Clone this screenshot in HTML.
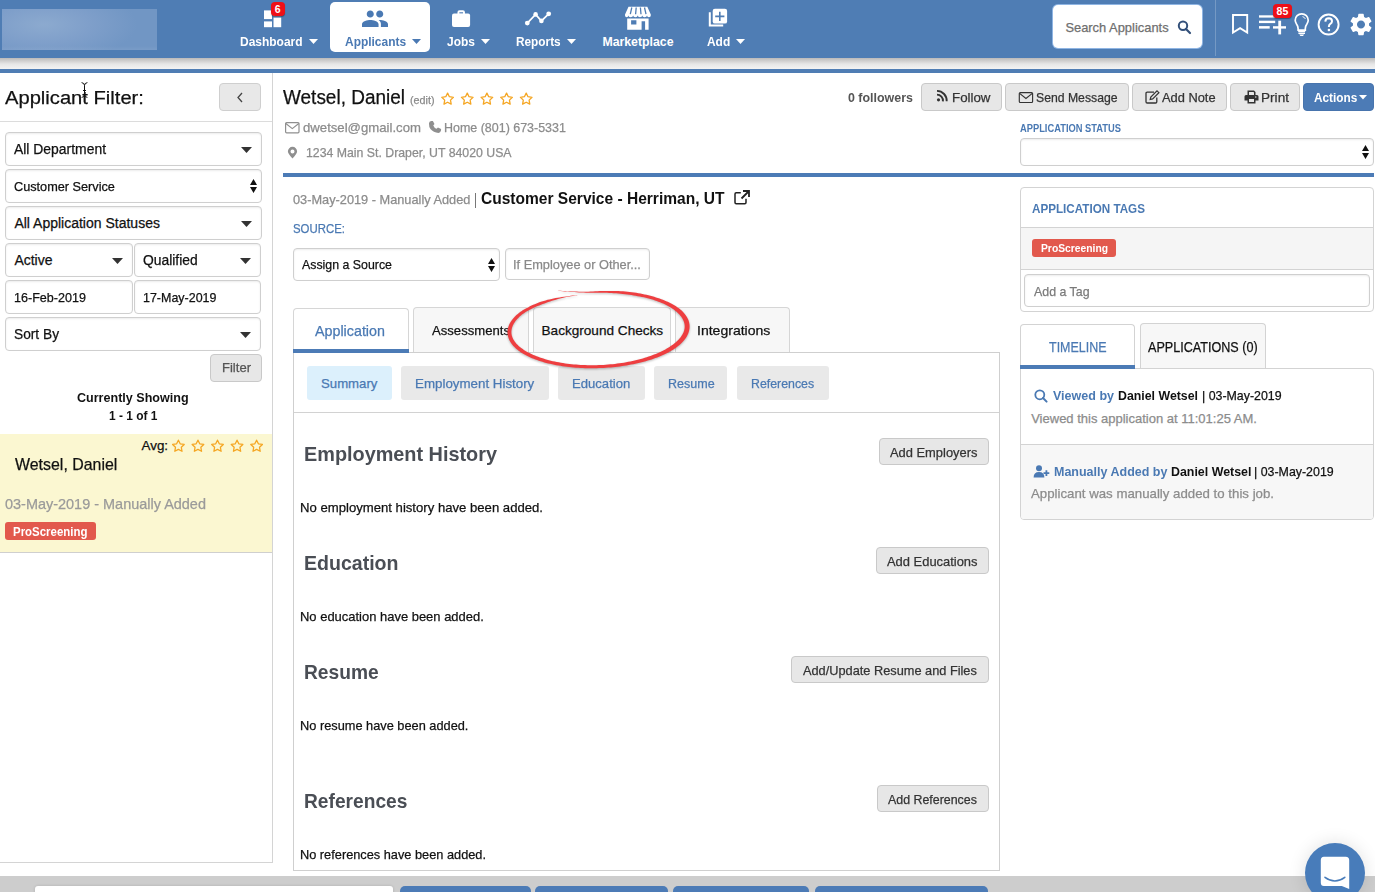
<!DOCTYPE html><html><head><meta charset="utf-8"><style>
html,body{margin:0;padding:0;width:1375px;height:892px;overflow:hidden;background:#fff;position:relative;font-family:"Liberation Sans",sans-serif;}
.t{position:absolute;white-space:nowrap;line-height:1;-webkit-text-stroke:0.25px currentColor;}
.b{position:absolute;}
.s{position:absolute;overflow:visible;}
</style></head><body>
<div class="b" style="left:0px;top:0px;width:1375px;height:58px;background:#4f7db4;"></div>
<div class="b" style="left:2px;top:9px;width:155px;height:41px;background:radial-gradient(ellipse 60% 90% at 27% 38%,#8caacf 0%,#7f9fca 50%,#7196c4 100%);"></div>
<div class="b" style="left:2px;top:46px;width:155px;height:4px;background:linear-gradient(rgba(255,255,255,0),rgba(255,255,255,.06));"></div>
<div class="b" style="left:0px;top:58px;width:1375px;height:11px;background:linear-gradient(#bbbaba,#e6e6e6 55%,#f3f3f3);"></div>
<div class="b" style="left:0px;top:69px;width:1375px;height:4px;background:#4f7db4;"></div>
<div class="b" style="left:330px;top:2px;width:100px;height:50px;background:#fff;border-radius:5px;"></div>
<div class="t" style="left:240.40px;top:36px;font-size:12.3px;color:#fff;font-weight:bold;-webkit-text-stroke:0;transform:scaleX(0.9744);transform-origin:0 0;">Dashboard</div>
<svg class="s" style="left:309px;top:39px;width:9px;height:5px;" viewBox="0 0 9 5"><path d="M0 0H9L4.5 5Z" fill="#fff"/></svg>
<div class="t" style="left:344.50px;top:36px;font-size:12.3px;color:#4a79b3;font-weight:bold;-webkit-text-stroke:0;transform:scaleX(0.9717);transform-origin:0 0;">Applicants</div>
<svg class="s" style="left:411.5px;top:39px;width:9px;height:5px;" viewBox="0 0 9 5"><path d="M0 0H9L4.5 5Z" fill="#4a79b3"/></svg>
<div class="t" style="left:447.00px;top:36px;font-size:12.3px;color:#fff;font-weight:bold;-webkit-text-stroke:0;transform:scaleX(0.9718);transform-origin:0 0;">Jobs</div>
<svg class="s" style="left:480.5px;top:39px;width:9px;height:5px;" viewBox="0 0 9 5"><path d="M0 0H9L4.5 5Z" fill="#fff"/></svg>
<div class="t" style="left:516.30px;top:36px;font-size:12.3px;color:#fff;font-weight:bold;-webkit-text-stroke:0;transform:scaleX(0.9618);transform-origin:0 0;">Reports</div>
<svg class="s" style="left:567px;top:39px;width:9px;height:5px;" viewBox="0 0 9 5"><path d="M0 0H9L4.5 5Z" fill="#fff"/></svg>
<div class="t" style="left:602.40px;top:36px;font-size:12.3px;color:#fff;font-weight:bold;-webkit-text-stroke:0;">Marketplace</div>
<div class="t" style="left:706.50px;top:36px;font-size:12.3px;color:#fff;font-weight:bold;-webkit-text-stroke:0;transform:scaleX(0.9703);transform-origin:0 0;">Add</div>
<svg class="s" style="left:735.5px;top:39px;width:9px;height:5px;" viewBox="0 0 9 5"><path d="M0 0H9L4.5 5Z" fill="#fff"/></svg>
<svg class="s" style="left:263px;top:8px;width:24px;height:22px;" viewBox="263 8 24 22"><g fill="#fff">
<rect x="264" y="10.4" width="8" height="8.7"/><rect x="264" y="21.4" width="8" height="5.8"/>
<rect x="273.5" y="17.6" width="7.7" height="9.6"/><rect x="273.5" y="10.4" width="7.7" height="5.8"/></g></svg>
<div class="b" style="left:270.5px;top:2px;width:14.5px;height:14px;background:#ee0f17;border-radius:4px;box-shadow:0 1px 1px rgba(0,0,0,.35);"></div>
<div class="t" style="left:270.50px;top:4px;font-size:10.5px;color:#fff;font-weight:bold;-webkit-text-stroke:0;width:14.5px;text-align:center;">6</div>
<svg class="s" style="left:362px;top:9.5px;width:26px;height:17.5px;preserveAspectRatio:none;" viewBox="1 5 22 14"><path fill="#4a79b3" d="M16 11c1.66 0 2.99-1.34 2.99-3S17.66 5 16 5c-1.66 0-3 1.34-3 3s1.34 3 3 3zm-8 0c1.66 0 2.99-1.34 2.99-3S9.66 5 8 5C6.34 5 5 6.34 5 8s1.34 3 3 3zm0 2c-2.330 0-7 1.17-7 3.5V19h14v-2.5c0-2.33-4.67-3.5-7-3.5zm8 0c-.29 0-.62.02-.97.05 1.16.84 1.97 1.97 1.97 3.45V19h6v-2.5c0-2.33-4.67-3.5-7-3.5z"/></svg>
<svg class="s" style="left:450px;top:8px;width:24px;height:22px;" viewBox="450 8 24 22"><rect x="452" y="13.5" width="18.1" height="13.4" rx="2" fill="#fff"/>
<rect x="458.4" y="11.2" width="5.6" height="3.6" rx="1" fill="none" stroke="#fff" stroke-width="1.9"/></svg>
<svg class="s" style="left:522px;top:10px;width:30px;height:17px;" viewBox="522 10 30 17"><polyline points="527.3,23.1 535.6,14.4 541.4,20.9 548.7,13.8" fill="none" stroke="#fff" stroke-width="1.7"/>
<g fill="#fff"><circle cx="527.3" cy="23.1" r="2.4"/><circle cx="535.6" cy="14.4" r="2.3"/><circle cx="541.4" cy="20.9" r="2.3"/><circle cx="548.7" cy="13.8" r="2.4"/></g></svg>
<svg class="s" style="left:624px;top:6px;width:28px;height:25px;" viewBox="624 6 28 25"><path fill="#fff" d="M628.5 6.8H647.3L650.8 14.5V15.5Q650.8 17.2 648.9 17.2Q647.1 17.2 647 15.6Q646.9 17.2 644.6 17.2Q642.4 17.2 642.3 15.6Q642.1 17.2 640 17.2Q637.9 17.2 637.7 15.6Q637.5 17.2 635.4 17.2Q633.3 17.2 633.1 15.6Q633 17.2 630.7 17.2Q628.4 17.2 628.3 15.6Q628.1 17.2 626.8 17.2Q625 17.2 625 15.5V14.5Z"/>
<path d="M631.8 7.5L630.3 14.2M636.2 7.5L635.6 14.2M640.4 7.5L641 14.2M644.5 7.5L646 14.2" stroke="#4f7db4" stroke-width="1.3"/>
<path fill="#fff" fill-rule="evenodd" d="M627.2 18.6H648.6V29.7H645.1V21.3H641.6V29.7H627.2ZM631.1 20.2V24.4H636.4V20.2Z"/></svg>
<svg class="s" style="left:707px;top:7px;width:22px;height:22px;" viewBox="707 7 22 22"><path d="M709.8 12.2V25.6H723.2" fill="none" stroke="#fff" stroke-width="2"/>
<rect x="712.7" y="8.7" width="14.4" height="14.9" rx="2.2" fill="#fff"/>
<path d="M719.8 11.8V21M715.2 16.4H724.4" stroke="#4f7db4" stroke-width="1.6"/></svg>
<div class="b" style="left:1052.7px;top:5.3px;width:149px;height:42.7px;background:#fff;border-radius:5px;box-shadow:0 0 0 1px #8fb5e3;"></div>
<div class="t" style="left:1065.40px;top:22px;font-size:12.9px;color:#6f6f6f;">Search Applicants</div>
<svg class="s" style="left:1177px;top:20px;width:16px;height:15px;" viewBox="1177 20 16 15"><circle cx="1183" cy="25.8" r="4.2" fill="none" stroke="#33507a" stroke-width="2"/>
<path d="M1186 29L1190 33" stroke="#33507a" stroke-width="2.2" stroke-linecap="round"/></svg>
<div class="b" style="left:1215px;top:0px;width:1px;height:56px;background:rgba(255,255,255,.22);"></div>
<svg class="s" style="left:1230px;top:12px;width:21px;height:24px;" viewBox="1230 12 21 24"><path d="M1233 15H1247.2V32.6L1240.1 28.2L1233 32.6Z" fill="none" stroke="#fff" stroke-width="1.9"/></svg>
<svg class="s" style="left:1257px;top:13px;width:32px;height:23px;" viewBox="1257 13 32 23"><g fill="#fff"><rect x="1259" y="15.3" width="16.2" height="2.3"/><rect x="1259" y="20.7" width="16.2" height="2.4"/><rect x="1259" y="26.1" width="10.7" height="2.5"/>
<rect x="1273" y="26.2" width="13" height="2.4"/><rect x="1278.3" y="20.7" width="2.8" height="13.7"/></g></svg>
<div class="b" style="left:1273px;top:4.1px;width:18.8px;height:13.9px;background:#ee0f17;border-radius:4px;box-shadow:0 1px 1px rgba(0,0,0,.35);"></div>
<div class="t" style="left:1273.00px;top:6px;font-size:10.5px;color:#fff;font-weight:bold;-webkit-text-stroke:0;width:18.8px;text-align:center;">85</div>
<svg class="s" style="left:1292px;top:13px;width:19px;height:24px;" viewBox="1292 13 19 24"><path d="M1298.1 30.2V28.5Q1298 26 1296.5 24Q1295.2 22 1295.2 20.3A6.5 6.5 0 0 1 1308.2 20.3Q1308.2 22 1306.9 24Q1305.4 26 1305.3 28.5V30.2Z" fill="none" stroke="#fff" stroke-width="1.7"/>
<path d="M1298.2 31.3H1305.2M1298.4 33.2H1305" stroke="#fff" stroke-width="1.4"/><path d="M1299.3 34.6H1304.1L1303 36H1300.4Z" fill="#fff"/>
<path d="M1302.5 16.6Q1304.6 17.1 1305.4 19" fill="none" stroke="#fff" stroke-width="0.9"/></svg>
<svg class="s" style="left:1316px;top:12px;width:25px;height:25px;" viewBox="1316 12 25 25"><circle cx="1328.6" cy="24.55" r="10" fill="none" stroke="#fff" stroke-width="1.9"/>
<path d="M1325.3 21.6Q1325.5 18.3 1328.8 18.3Q1332 18.4 1332 21.2Q1332 22.8 1330.3 23.8Q1328.9 24.6 1328.9 26.4V27" fill="none" stroke="#fff" stroke-width="2"/>
<circle cx="1328.9" cy="30" r="1.3" fill="#fff"/></svg>
<svg class="s" style="left:1349px;top:12px;width:24px;height:25px;transform:scale(1.12);" viewBox="0 0 24 24"><path fill="#fff" d="M19.14 12.94c.04-.3.06-.61.06-.94 0-.32-.02-.64-.07-.94l2.03-1.58c.18-.14.23-.41.12-.61l-1.92-3.32c-.12-.22-.37-.29-.59-.22l-2.39.96c-.5-.38-1.03-.7-1.62-.94l-.36-2.54c-.04-.24-.24-.41-.48-.41h-3.84c-.24 0-.43.17-.47.41l-.36 2.54c-.59.24-1.13.57-1.62.94l-2.39-.96c-.22-.08-.47 0-.59.22L2.74 8.87c-.12.21-.08.47.12.61l2.03 1.58c-.05.3-.09.63-.09.94s.02.64.07.94l-2.03 1.58c-.18.14-.23.41-.12.61l1.92 3.32c.12.22.37.29.59.22l2.39-.96c.5.38 1.03.7 1.62.94l.36 2.54c.05.24.24.41.48.41h3.84c.24 0 .44-.17.47-.41l.36-2.54c.59-.24 1.13-.56 1.62-.94l2.39.96c.22.08.47 0 .59-.22l1.92-3.32c.12-.22.07-.47-.12-.61l-2.01-1.58zM12 15.6c-1.98 0-3.6-1.62-3.6-3.6s1.62-3.6 3.6-3.6 3.6 1.62 3.6 3.6-1.62 3.6-3.6 3.6z"/></svg>
<div class="b" style="left:272px;top:73px;width:1px;height:790px;background:#d4d4d4;"></div>
<div class="b" style="left:0px;top:862px;width:272px;height:1px;background:#d4d4d4;"></div>
<div class="t" style="left:5.00px;top:88px;font-size:19.2px;color:#111;transform:scaleX(1.0505);transform-origin:0 0;">Applicant Filter:</div>
<svg class="s" style="left:80px;top:81px;width:10px;height:18px;" viewBox="80 81 10 18"><path d="M81.6 82.6Q84.5 83 84.5 85.5V95Q84.5 97 81.6 97.4M87.4 82.6Q84.5 83 84.5 85.5M87.4 97.4Q84.5 97 84.5 95M83 90.5H86" fill="none" stroke="#111" stroke-width="1"/></svg>
<div class="b" style="left:219px;top:83px;width:42px;height:28px;background:#e7e7e7;border:1px solid #c9c9c9;border-radius:4px;box-sizing:border-box;background:#e8e8e8;border-color:#cfcfcf;"></div>
<svg class="s" style="left:236px;top:92px;width:8px;height:11px;" viewBox="0 0 8 11"><path d="M6 1L2 5.5L6 10" fill="none" stroke="#444" stroke-width="1.3"/></svg>
<div class="b" style="left:0px;top:121px;width:272px;height:1px;background:#dcdcdc;"></div>
<div class="b" style="left:5px;top:132px;width:257px;height:34px;background:#fff;border:1px solid #cfcfcf;border-radius:4px;box-sizing:border-box;box-shadow:inset 0 1px 2px rgba(0,0,0,.08);"></div>
<div class="t" style="left:14.40px;top:142px;font-size:14px;color:#111;transform:scaleX(0.9936);transform-origin:0 0;">All Department</div>
<svg class="s" style="left:241px;top:146.5px;width:11px;height:6px;" viewBox="0 0 11 6"><path d="M0 0H11L5.5 6Z" fill="#333"/></svg>
<div class="b" style="left:5px;top:169px;width:257px;height:34px;background:#fff;border:1px solid #cfcfcf;border-radius:4px;box-sizing:border-box;box-shadow:inset 0 1px 2px rgba(0,0,0,.08);"></div>
<div class="t" style="left:14.40px;top:181px;font-size:12.9px;color:#111;transform:scaleX(0.9852);transform-origin:0 0;">Customer Service</div>
<svg class="s" style="left:250px;top:179px;width:7px;height:14px;" viewBox="0 0 7 14"><path d="M0 6H7L3.5 0Z M0 8H7L3.5 14Z" fill="#111"/></svg>
<div class="b" style="left:5px;top:206px;width:257px;height:34px;background:#fff;border:1px solid #cfcfcf;border-radius:4px;box-sizing:border-box;box-shadow:inset 0 1px 2px rgba(0,0,0,.08);"></div>
<div class="t" style="left:14.40px;top:216px;font-size:14px;color:#111;">All Application Statuses</div>
<svg class="s" style="left:241px;top:220.5px;width:11px;height:6px;" viewBox="0 0 11 6"><path d="M0 0H11L5.5 6Z" fill="#333"/></svg>
<div class="b" style="left:5px;top:243px;width:127.5px;height:34px;background:#fff;border:1px solid #cfcfcf;border-radius:4px;box-sizing:border-box;box-shadow:inset 0 1px 2px rgba(0,0,0,.08);"></div>
<div class="t" style="left:14.40px;top:253px;font-size:14px;color:#111;">Active</div>
<svg class="s" style="left:111.5px;top:257.5px;width:11px;height:6px;" viewBox="0 0 11 6"><path d="M0 0H11L5.5 6Z" fill="#333"/></svg>
<div class="b" style="left:133.5px;top:243px;width:127.5px;height:34px;background:#fff;border:1px solid #cfcfcf;border-radius:4px;box-sizing:border-box;box-shadow:inset 0 1px 2px rgba(0,0,0,.08);"></div>
<div class="t" style="left:142.90px;top:253px;font-size:14px;color:#111;transform:scaleX(0.9899);transform-origin:0 0;">Qualified</div>
<svg class="s" style="left:240.0px;top:257.5px;width:11px;height:6px;" viewBox="0 0 11 6"><path d="M0 0H11L5.5 6Z" fill="#333"/></svg>
<div class="b" style="left:5px;top:280px;width:127.5px;height:34px;background:#fff;border:1px solid #cfcfcf;border-radius:4px;box-sizing:border-box;box-shadow:inset 0 1px 2px rgba(0,0,0,.08);"></div>
<div class="t" style="left:14.20px;top:292px;font-size:12.9px;color:#111;transform:scaleX(0.9747);transform-origin:0 0;">16-Feb-2019</div>
<div class="b" style="left:133.5px;top:280px;width:127.5px;height:34px;background:#fff;border:1px solid #cfcfcf;border-radius:4px;box-sizing:border-box;box-shadow:inset 0 1px 2px rgba(0,0,0,.08);"></div>
<div class="t" style="left:142.80px;top:292px;font-size:12.9px;color:#111;transform:scaleX(0.9670);transform-origin:0 0;">17-May-2019</div>
<div class="b" style="left:5px;top:317px;width:256px;height:34px;background:#fff;border:1px solid #cfcfcf;border-radius:4px;box-sizing:border-box;box-shadow:inset 0 1px 2px rgba(0,0,0,.08);"></div>
<div class="t" style="left:14.40px;top:327px;font-size:14px;color:#111;transform:scaleX(0.9803);transform-origin:0 0;">Sort By</div>
<svg class="s" style="left:240px;top:331.5px;width:11px;height:6px;" viewBox="0 0 11 6"><path d="M0 0H11L5.5 6Z" fill="#333"/></svg>
<div class="b" style="left:210px;top:354px;width:51.5px;height:27.5px;background:#e7e7e7;border:1px solid #c9c9c9;border-radius:4px;box-sizing:border-box;"></div>
<div class="t" style="left:221.50px;top:362px;font-size:12.9px;color:#555;transform:scaleX(1.0116);transform-origin:0 0;">Filter</div>
<div class="t" style="left:77.20px;top:391px;font-size:13px;color:#111;font-weight:bold;-webkit-text-stroke:0;transform:scaleX(0.9657);transform-origin:0 0;">Currently Showing</div>
<div class="t" style="left:108.80px;top:409px;font-size:13px;color:#111;font-weight:bold;-webkit-text-stroke:0;transform:scaleX(0.9178);transform-origin:0 0;">1 - 1 of 1</div>
<div class="b" style="left:0px;top:434px;width:272px;height:119px;background:#fbf7d1;border-bottom:1px solid #cfcfcf;box-sizing:border-box;"></div>
<div class="t" style="left:141.50px;top:439px;font-size:13.4px;color:#111;">Avg:</div>
<svg class="s" style="left:165px;top:436px;width:105px;height:20px;" viewBox="165 436 105 20"><polygon points="178.40,440.20 180.19,443.83 184.20,444.41 181.30,447.24 181.99,451.24 178.40,449.35 174.81,451.24 175.50,447.24 172.60,444.41 176.61,443.83" fill="none" stroke="#f5a623" stroke-width="1.3" stroke-linejoin="round"/><polygon points="197.95,440.20 199.74,443.83 203.75,444.41 200.85,447.24 201.54,451.24 197.95,449.35 194.36,451.24 195.05,447.24 192.15,444.41 196.16,443.83" fill="none" stroke="#f5a623" stroke-width="1.3" stroke-linejoin="round"/><polygon points="217.50,440.20 219.29,443.83 223.30,444.41 220.40,447.24 221.09,451.24 217.50,449.35 213.91,451.24 214.60,447.24 211.70,444.41 215.71,443.83" fill="none" stroke="#f5a623" stroke-width="1.3" stroke-linejoin="round"/><polygon points="237.05,440.20 238.84,443.83 242.85,444.41 239.95,447.24 240.64,451.24 237.05,449.35 233.46,451.24 234.15,447.24 231.25,444.41 235.26,443.83" fill="none" stroke="#f5a623" stroke-width="1.3" stroke-linejoin="round"/><polygon points="256.60,440.20 258.39,443.83 262.40,444.41 259.50,447.24 260.19,451.24 256.60,449.35 253.01,451.24 253.70,447.24 250.80,444.41 254.81,443.83" fill="none" stroke="#f5a623" stroke-width="1.3" stroke-linejoin="round"/></svg>
<div class="t" style="left:15.30px;top:456px;font-size:17px;color:#111;transform:scaleX(0.9370);transform-origin:0 0;">Wetsel, Daniel</div>
<div class="t" style="left:5.00px;top:497px;font-size:14.8px;color:#9a9a9a;transform:scaleX(0.9772);transform-origin:0 0;">03-May-2019 - Manually Added</div>
<div class="b" style="left:5px;top:522px;width:91px;height:18px;background:#e2594d;border-radius:3px;"></div>
<div class="t" style="left:13.20px;top:526px;font-size:12px;color:#fff;font-weight:bold;-webkit-text-stroke:0;transform:scaleX(0.9535);transform-origin:0 0;">ProScreening</div>
<div class="t" style="left:283.00px;top:88px;font-size:19.6px;color:#111;transform:scaleX(0.9682);transform-origin:0 0;">Wetsel, Daniel</div>
<div class="t" style="left:410.40px;top:95px;font-size:11px;color:#8a8a8a;transform:scaleX(0.9775);transform-origin:0 0;">(edit)</div>
<svg class="s" style="left:436px;top:86px;width:100px;height:20px;" viewBox="436 86 100 20"><polygon points="447.60,93.10 449.39,96.73 453.40,97.31 450.50,100.14 451.19,104.14 447.60,102.25 444.01,104.14 444.70,100.14 441.80,97.31 445.81,96.73" fill="none" stroke="#f5a623" stroke-width="1.3" stroke-linejoin="round"/><polygon points="467.25,93.10 469.04,96.73 473.05,97.31 470.15,100.14 470.84,104.14 467.25,102.25 463.66,104.14 464.35,100.14 461.45,97.31 465.46,96.73" fill="none" stroke="#f5a623" stroke-width="1.3" stroke-linejoin="round"/><polygon points="486.90,93.10 488.69,96.73 492.70,97.31 489.80,100.14 490.49,104.14 486.90,102.25 483.31,104.14 484.00,100.14 481.10,97.31 485.11,96.73" fill="none" stroke="#f5a623" stroke-width="1.3" stroke-linejoin="round"/><polygon points="506.55,93.10 508.34,96.73 512.35,97.31 509.45,100.14 510.14,104.14 506.55,102.25 502.96,104.14 503.65,100.14 500.75,97.31 504.76,96.73" fill="none" stroke="#f5a623" stroke-width="1.3" stroke-linejoin="round"/><polygon points="526.20,93.10 527.99,96.73 532.00,97.31 529.10,100.14 529.79,104.14 526.20,102.25 522.61,104.14 523.30,100.14 520.40,97.31 524.41,96.73" fill="none" stroke="#f5a623" stroke-width="1.3" stroke-linejoin="round"/></svg>
<svg class="s" style="left:284px;top:121px;width:16px;height:13px;" viewBox="284 121 16 13"><rect x="285.6" y="122.6" width="13.4" height="10.2" rx="1" fill="none" stroke="#8f8f8f" stroke-width="1.2"/><path d="M285.8 123.5L292.3 128.6L298.8 123.5" fill="none" stroke="#8f8f8f" stroke-width="1.2"/></svg>
<div class="t" style="left:302.50px;top:122px;font-size:12.9px;color:#8c8c8c;transform:scaleX(1.0206);transform-origin:0 0;">dwetsel@gmail.com</div>
<svg class="s" style="left:427px;top:120px;width:16px;height:14px;" viewBox="0 0 16 16"><path fill="#8f8f8f" d="M3.6 1.2L5.6 1L7.4 4.6L6 6.2Q7.1 8.9 9.8 10.1L11.4 8.6L15 10.4L14.8 12.4Q14.2 14.8 12 14.9Q6.2 14.6 2.8 10.4Q1 7.8 1.1 4Q1.3 1.7 3.6 1.2Z"/></svg>
<div class="t" style="left:444.00px;top:122px;font-size:12.9px;color:#8c8c8c;transform:scaleX(0.9666);transform-origin:0 0;">Home (801) 673-5331</div>
<svg class="s" style="left:287px;top:146px;width:11px;height:13px;" viewBox="0 0 11 13"><path fill="#8f8f8f" d="M5.5 0.8A4.6 4.6 0 0 1 10.1 5.4Q10.1 7.6 5.5 12.4Q0.9 7.6 0.9 5.4A4.6 4.6 0 0 1 5.5 0.8ZM5.5 3.4A2 2 0 1 0 5.5 7.4A2 2 0 1 0 5.5 3.4Z"/></svg>
<div class="t" style="left:305.50px;top:147px;font-size:12.9px;color:#8c8c8c;transform:scaleX(0.9541);transform-origin:0 0;">1234 Main St. Draper, UT 84020 USA</div>
<div class="t" style="left:848.00px;top:92px;font-size:12.6px;color:#555;font-weight:bold;-webkit-text-stroke:0;transform:scaleX(0.9876);transform-origin:0 0;">0 followers</div>
<div class="b" style="left:921px;top:83px;width:81px;height:28px;background:#e7e7e7;border:1px solid #c9c9c9;border-radius:4px;box-sizing:border-box;"></div>
<svg class="s" style="left:935px;top:89px;width:14px;height:14px;" viewBox="935 89 14 14"><circle cx="938.5" cy="99.8" r="1.6" fill="#333"/><path d="M937 94.6A6 6 0 0 1 942.9 101.3M937 90.9A9.8 9.8 0 0 1 946.7 101.3" fill="none" stroke="#333" stroke-width="1.9"/></svg>
<div class="t" style="left:952.30px;top:91px;font-size:13.2px;color:#333;transform:scaleX(1.0093);transform-origin:0 0;">Follow</div>
<div class="b" style="left:1005px;top:83px;width:124px;height:28px;background:#e7e7e7;border:1px solid #c9c9c9;border-radius:4px;box-sizing:border-box;"></div>
<svg class="s" style="left:1017px;top:90px;width:18px;height:15px;" viewBox="1017 90 18 15"><rect x="1019.3" y="92.6" width="13.3" height="9.9" rx="1" fill="none" stroke="#333" stroke-width="1.15"/><path d="M1019.6 93.4L1025.95 98.4L1032.3 93.4" fill="none" stroke="#333" stroke-width="1.15"/></svg>
<div class="t" style="left:1036.00px;top:91px;font-size:13.2px;color:#333;transform:scaleX(0.9267);transform-origin:0 0;">Send Message</div>
<div class="b" style="left:1132px;top:83px;width:95px;height:28px;background:#e7e7e7;border:1px solid #c9c9c9;border-radius:4px;box-sizing:border-box;"></div>
<svg class="s" style="left:1145px;top:89.5px;width:15px;height:14px;" viewBox="0 0 15 14"><path d="M9 2.2H2.2Q1 2.2 1 3.4V11.8Q1 13 2.2 13H10.6Q11.8 13 11.8 11.8V7.5" fill="none" stroke="#333" stroke-width="1.3"/><path d="M5.2 9.5L5.8 7L12 0.8L13.9 2.7L7.7 8.9Z" fill="none" stroke="#333" stroke-width="1.2"/></svg>
<div class="t" style="left:1162.40px;top:91px;font-size:13.2px;color:#333;transform:scaleX(0.9739);transform-origin:0 0;">Add Note</div>
<div class="b" style="left:1230px;top:83px;width:70px;height:28px;background:#e7e7e7;border:1px solid #c9c9c9;border-radius:4px;box-sizing:border-box;"></div>
<svg class="s" style="left:1244px;top:90px;width:15px;height:14px;" viewBox="0 0 15 14"><path fill="#333" fill-rule="evenodd" d="M3.5 0.5H10L11.5 2V5H13Q14.5 5 14.5 6.5V10.5H11.5V13.5H3.5V10.5H0.5V6.5Q0.5 5 2 5H3.5ZM5 2V5H10V2.6L9.4 2ZM5 9V12H10V9ZM11.8 6.3A0.7 0.7 0 1 0 11.8 7.7A0.7 0.7 0 1 0 11.8 6.3Z"/></svg>
<div class="t" style="left:1261.00px;top:91px;font-size:13.2px;color:#333;transform:scaleX(1.0316);transform-origin:0 0;">Print</div>
<div class="b" style="left:1303px;top:83px;width:71px;height:28px;background:#4c7bb6;border:1px solid #4874ad;border-radius:4px;box-sizing:border-box;"></div>
<div class="t" style="left:1313.60px;top:92px;font-size:12.6px;color:#fff;font-weight:bold;-webkit-text-stroke:0;transform:scaleX(0.9393);transform-origin:0 0;">Actions</div>
<svg class="s" style="left:1359px;top:94.5px;width:8px;height:4.5px;" viewBox="0 0 8 4.5"><path d="M0 0H8L4.0 4.5Z" fill="#fff"/></svg>
<div class="t" style="left:1020.20px;top:123px;font-size:10.5px;color:#4a79b3;font-weight:bold;-webkit-text-stroke:0;transform:scaleX(0.8879);transform-origin:0 0;">APPLICATION STATUS</div>
<div class="b" style="left:1020px;top:138px;width:354px;height:28px;background:#fff;border:1px solid #cfcfcf;border-radius:4px;box-sizing:border-box;box-shadow:inset 0 1px 2px rgba(0,0,0,.08);"></div>
<svg class="s" style="left:1362px;top:145px;width:7px;height:14px;" viewBox="0 0 7 14"><path d="M0 6H7L3.5 0Z M0 8H7L3.5 14Z" fill="#111"/></svg>
<div class="b" style="left:283px;top:173px;width:1091px;height:4px;background:#4c7bb6;"></div>
<div class="t" style="left:293.00px;top:194px;font-size:12.9px;color:#8c8c8c;transform:scaleX(0.9901);transform-origin:0 0;">03-May-2019 - Manually Added</div>
<div class="b" style="left:475px;top:192.5px;width:1px;height:15px;background:#777;"></div>
<div class="t" style="left:480.50px;top:190px;font-size:16.2px;color:#111;font-weight:bold;-webkit-text-stroke:0;transform:scaleX(0.9599);transform-origin:0 0;">Customer Service - Herriman, UT</div>
<svg class="s" style="left:734px;top:190px;width:17px;height:15px;" viewBox="0 0 17 15"><path d="M12 8.8V12.6Q12 13.8 10.8 13.8H2.2Q1 13.8 1 12.6V4Q1 2.8 2.2 2.8H6.8" fill="none" stroke="#222" stroke-width="1.5"/><path d="M9 1H15V7M15 1L7.5 8.5" fill="none" stroke="#222" stroke-width="1.8"/></svg>
<div class="t" style="left:293.00px;top:222px;font-size:13.2px;color:#4a79b3;transform:scaleX(0.8646);transform-origin:0 0;">SOURCE:</div>
<div class="b" style="left:293.4px;top:248px;width:207px;height:33.4px;background:#fff;border:1px solid #cfcfcf;border-radius:4px;box-sizing:border-box;box-shadow:inset 0 1px 2px rgba(0,0,0,.08);"></div>
<div class="t" style="left:302.20px;top:259px;font-size:12.9px;color:#111;transform:scaleX(0.9581);transform-origin:0 0;">Assign a Source</div>
<svg class="s" style="left:488px;top:257.5px;width:7px;height:14px;" viewBox="0 0 7 14"><path d="M0 6H7L3.5 0Z M0 8H7L3.5 14Z" fill="#111"/></svg>
<div class="b" style="left:504.5px;top:247.6px;width:145px;height:32.8px;background:#fff;border:1px solid #cfcfcf;border-radius:4px;box-sizing:border-box;box-shadow:inset 0 1px 2px rgba(0,0,0,.08);"></div>
<div class="t" style="left:513.20px;top:259px;font-size:12.9px;color:#8a8a8a;transform:scaleX(0.9918);transform-origin:0 0;">If Employee or Other...</div>
<div class="b" style="left:293px;top:308px;width:116px;height:44px;background:#fff;border:1px solid #d6d6d6;border-bottom:none;border-radius:4px 4px 0 0;box-sizing:border-box;"></div>
<div class="b" style="left:413px;top:307px;width:115.60000000000002px;height:45px;background:#f7f7f7;border:1px solid #d6d6d6;border-bottom:none;border-radius:4px 4px 0 0;box-sizing:border-box;"></div>
<div class="b" style="left:533px;top:307px;width:137.60000000000002px;height:45px;background:#f7f7f7;border:1px solid #d6d6d6;border-bottom:none;border-radius:4px 4px 0 0;box-sizing:border-box;"></div>
<div class="b" style="left:675px;top:307px;width:115px;height:45px;background:#f7f7f7;border:1px solid #d6d6d6;border-bottom:none;border-radius:4px 4px 0 0;box-sizing:border-box;"></div>
<div class="t" style="left:315.30px;top:324px;font-size:14.4px;color:#4a79b3;transform:scaleX(0.9936);transform-origin:0 0;">Application</div>
<div class="t" style="left:431.60px;top:324px;font-size:13.6px;color:#111;transform:scaleX(0.9645);transform-origin:0 0;">Assessments</div>
<div class="t" style="left:541.50px;top:324px;font-size:13.6px;color:#111;">Background Checks</div>
<div class="t" style="left:696.60px;top:324px;font-size:13.6px;color:#111;transform:scaleX(1.0328);transform-origin:0 0;">Integrations</div>
<div class="b" style="left:293px;top:352px;width:707px;height:519px;border:1px solid #cfcfcf;box-sizing:border-box;"></div>
<div class="b" style="left:293px;top:349px;width:116px;height:4px;background:#4c7bb6;"></div>
<div class="b" style="left:307px;top:366px;width:85px;height:34px;background:#dcf0fc;border-radius:3px;"></div>
<div class="t" style="left:321.00px;top:377px;font-size:13.2px;color:#4a79b3;">Summary</div>
<div class="b" style="left:401px;top:366px;width:148px;height:34px;background:#e9e9e9;border-radius:3px;"></div>
<div class="t" style="left:415.40px;top:377px;font-size:13.2px;color:#4a79b3;transform:scaleX(1.0110);transform-origin:0 0;">Employment History</div>
<div class="b" style="left:558px;top:366px;width:87px;height:34px;background:#e9e9e9;border-radius:3px;"></div>
<div class="t" style="left:572.00px;top:377px;font-size:13.2px;color:#4a79b3;transform:scaleX(0.9930);transform-origin:0 0;">Education</div>
<div class="b" style="left:654px;top:366px;width:73px;height:34px;background:#e9e9e9;border-radius:3px;"></div>
<div class="t" style="left:667.50px;top:377px;font-size:13.2px;color:#4a79b3;transform:scaleX(0.9501);transform-origin:0 0;">Resume</div>
<div class="b" style="left:737px;top:366px;width:92px;height:34px;background:#e9e9e9;border-radius:3px;"></div>
<div class="t" style="left:751.30px;top:377px;font-size:13.2px;color:#4a79b3;transform:scaleX(0.9362);transform-origin:0 0;">References</div>
<div class="b" style="left:294px;top:412px;width:705px;height:1px;background:#d2d2d2;"></div>
<div class="t" style="left:303.80px;top:444px;font-size:20.6px;color:#4a4e55;font-weight:bold;-webkit-text-stroke:0;transform:scaleX(0.9635);transform-origin:0 0;">Employment History</div>
<div class="b" style="left:879.4px;top:438.3px;width:109.60000000000002px;height:27px;background:#e7e7e7;border:1px solid #c9c9c9;border-radius:4px;box-sizing:border-box;"></div>
<div class="t" style="left:890.10px;top:446px;font-size:13.2px;color:#333;transform:scaleX(0.9776);transform-origin:0 0;">Add Employers</div>
<div class="t" style="left:300.20px;top:501px;font-size:13.5px;color:#111;transform:scaleX(0.9724);transform-origin:0 0;">No employment history have been added.</div>
<div class="t" style="left:303.80px;top:553px;font-size:20.6px;color:#4a4e55;font-weight:bold;-webkit-text-stroke:0;transform:scaleX(0.9490);transform-origin:0 0;">Education</div>
<div class="b" style="left:876.2px;top:547.3px;width:112.79999999999995px;height:27px;background:#e7e7e7;border:1px solid #c9c9c9;border-radius:4px;box-sizing:border-box;"></div>
<div class="t" style="left:887.00px;top:555px;font-size:13.2px;color:#333;transform:scaleX(0.9798);transform-origin:0 0;">Add Educations</div>
<div class="t" style="left:300.20px;top:610px;font-size:13.5px;color:#111;transform:scaleX(0.9602);transform-origin:0 0;">No education have been added.</div>
<div class="t" style="left:303.80px;top:662px;font-size:20.6px;color:#4a4e55;font-weight:bold;-webkit-text-stroke:0;transform:scaleX(0.9320);transform-origin:0 0;">Resume</div>
<div class="b" style="left:791px;top:656.3px;width:198px;height:27px;background:#e7e7e7;border:1px solid #c9c9c9;border-radius:4px;box-sizing:border-box;"></div>
<div class="t" style="left:802.80px;top:664px;font-size:13.2px;color:#333;transform:scaleX(0.9679);transform-origin:0 0;">Add/Update Resume and Files</div>
<div class="t" style="left:300.20px;top:719px;font-size:13.5px;color:#111;transform:scaleX(0.9467);transform-origin:0 0;">No resume have been added.</div>
<div class="t" style="left:303.80px;top:791px;font-size:20.6px;color:#4a4e55;font-weight:bold;-webkit-text-stroke:0;transform:scaleX(0.9309);transform-origin:0 0;">References</div>
<div class="b" style="left:877px;top:785.3px;width:112px;height:27px;background:#e7e7e7;border:1px solid #c9c9c9;border-radius:4px;box-sizing:border-box;"></div>
<div class="t" style="left:887.80px;top:793px;font-size:13.2px;color:#333;transform:scaleX(0.9402);transform-origin:0 0;">Add References</div>
<div class="t" style="left:300.20px;top:848px;font-size:13.5px;color:#111;transform:scaleX(0.9459);transform-origin:0 0;">No references have been added.</div>
<div class="b" style="left:1020px;top:187px;width:354px;height:125px;border:1px solid #d3d3d3;border-radius:4px;box-sizing:border-box;"></div>
<div class="b" style="left:1021px;top:227px;width:352px;height:43px;background:#f5f5f5;border-top:1px solid #d3d3d3;border-bottom:1px solid #d3d3d3;box-sizing:border-box;"></div>
<div class="t" style="left:1031.80px;top:202px;font-size:13.4px;color:#4a79b3;font-weight:bold;-webkit-text-stroke:0;transform:scaleX(0.8707);transform-origin:0 0;">APPLICATION TAGS</div>
<div class="b" style="left:1032px;top:239px;width:83.7px;height:18px;background:#e2594d;border-radius:3px;"></div>
<div class="t" style="left:1040.50px;top:243px;font-size:11.5px;color:#fff;font-weight:bold;-webkit-text-stroke:0;transform:scaleX(0.8960);transform-origin:0 0;">ProScreening</div>
<div class="b" style="left:1024px;top:274px;width:346px;height:33px;background:#fff;border:1px solid #cfcfcf;border-radius:4px;box-sizing:border-box;box-shadow:inset 0 1px 2px rgba(0,0,0,.08);"></div>
<div class="t" style="left:1034.00px;top:286px;font-size:12.9px;color:#7a7a7a;transform:scaleX(0.9609);transform-origin:0 0;">Add a Tag</div>
<div class="b" style="left:1020px;top:324px;width:115px;height:44px;background:#fff;border:1px solid #d3d3d3;border-bottom:none;border-radius:4px 4px 0 0;box-sizing:border-box;"></div>
<div class="b" style="left:1140px;top:323px;width:125.6px;height:45px;background:#f7f7f7;border:1px solid #d3d3d3;border-bottom:none;border-radius:4px 4px 0 0;box-sizing:border-box;"></div>
<div class="t" style="left:1049.30px;top:340px;font-size:14.6px;color:#4a79b3;transform:scaleX(0.8554);transform-origin:0 0;">TIMELINE</div>
<div class="t" style="left:1148.00px;top:340px;font-size:14.6px;color:#111;transform:scaleX(0.8631);transform-origin:0 0;">APPLICATIONS (0)</div>
<div class="b" style="left:1020px;top:368px;width:354px;height:152px;border:1px solid #d3d3d3;border-radius:0 4px 4px 4px;box-sizing:border-box;"></div>
<div class="b" style="left:1021px;top:444px;width:352px;height:75px;background:#f7f7f7;border-top:1px solid #d3d3d3;box-sizing:border-box;border-radius:0 0 3px 3px;"></div>
<div class="b" style="left:1020px;top:365px;width:115px;height:4px;background:#4c7bb6;"></div>
<svg class="s" style="left:1034px;top:389px;width:14px;height:14px;" viewBox="0 0 14 14"><circle cx="5.8" cy="5.8" r="4.5" fill="none" stroke="#4a79b3" stroke-width="1.8"/><path d="M9 9L12.6 12.6" stroke="#4a79b3" stroke-width="2" stroke-linecap="round"/></svg>
<div class="t" style="left:1053.30px;top:389px;font-size:13px;color:#4a79b3;font-weight:bold;-webkit-text-stroke:0;transform:scaleX(0.9630);transform-origin:0 0;">Viewed by</div>
<div class="t" style="left:1118.00px;top:389px;font-size:13px;color:#111;font-weight:bold;-webkit-text-stroke:0;transform:scaleX(0.9491);transform-origin:0 0;">Daniel Wetsel</div>
<div class="t" style="left:1201.70px;top:389px;font-size:13px;color:#111;transform:scaleX(0.9523);transform-origin:0 0;">| 03-May-2019</div>
<div class="t" style="left:1031.20px;top:412px;font-size:13px;color:#8c8c8c;">Viewed this application at 11:01:25 AM.</div>
<svg class="s" style="left:1033px;top:465px;width:17px;height:13px;" viewBox="0 0 17 13"><circle cx="6" cy="3.3" r="3" fill="#4a79b3"/><path d="M0.6 12.5Q0.6 7 6 7Q11.4 7 11.4 12.5Z" fill="#4a79b3"/><path d="M10.5 8.2H16.3M13.4 5.3V11.1" stroke="#4a79b3" stroke-width="1.8"/></svg>
<div class="t" style="left:1053.80px;top:465px;font-size:13px;color:#4a79b3;font-weight:bold;-webkit-text-stroke:0;transform:scaleX(0.9612);transform-origin:0 0;">Manually Added by</div>
<div class="t" style="left:1170.60px;top:465px;font-size:13px;color:#111;font-weight:bold;-webkit-text-stroke:0;transform:scaleX(0.9538);transform-origin:0 0;">Daniel Wetsel</div>
<div class="t" style="left:1254.20px;top:465px;font-size:13px;color:#111;transform:scaleX(0.9535);transform-origin:0 0;">| 03-May-2019</div>
<div class="t" style="left:1031.20px;top:487px;font-size:13px;color:#8c8c8c;transform:scaleX(1.0190);transform-origin:0 0;">Applicant was manually added to this job.</div>
<div class="b" style="left:0px;top:876px;width:1375px;height:16px;background:#cdcdcd;"></div>
<div class="b" style="left:35px;top:886px;width:358px;height:10px;background:#fff;border-radius:3px;box-shadow:0 0 3px rgba(0,0,0,.15);"></div>
<div class="b" style="left:400px;top:886px;width:130.60000000000002px;height:10px;background:#4c7bb6;border-radius:5px 5px 0 0;"></div>
<div class="b" style="left:534.5px;top:886px;width:133.10000000000002px;height:10px;background:#4c7bb6;border-radius:5px 5px 0 0;"></div>
<div class="b" style="left:672.7px;top:886px;width:136.79999999999995px;height:10px;background:#4c7bb6;border-radius:5px 5px 0 0;"></div>
<div class="b" style="left:814.5px;top:886px;width:173.10000000000002px;height:10px;background:#4c7bb6;border-radius:5px 5px 0 0;"></div>
<div class="b" style="left:1305px;top:843px;width:60px;height:60px;background:#487cba;border-radius:50%;box-shadow:0 0 18px rgba(0,0,0,.12);"></div>
<svg class="s" style="left:1320px;top:856px;width:30px;height:34px;" viewBox="0 0 30 34"><path d="M3.8 0.8H25.7Q29.2 0.8 29.2 4.3V32.9L21.8 29.9H3.8Q0.8 29.9 0.8 26.4V4.3Q0.8 0.8 3.8 0.8Z" fill="#fff"/><path d="M5 21.3Q14.9 28.6 24.8 21.3" fill="none" stroke="#487cba" stroke-width="1.6" stroke-linecap="round"/></svg>
<svg class="s" style="left:495px;top:280px;width:210px;height:95px;filter:drop-shadow(0 1px 1.2px rgba(0,0,0,.28));" viewBox="495 280 210 95"><path d="M577.28 295.10 L575.05 295.35 L572.83 295.61 L570.62 295.87 L568.43 296.15 L566.25 296.44 L564.09 296.74 L561.94 297.05 L559.82 297.39 L557.71 297.74 L555.63 298.11 L553.57 298.51 L551.54 298.94 L549.54 299.39 L547.57 299.87 L545.63 300.38 L543.72 300.92 L541.86 301.50 L540.03 302.12 L538.24 302.77 L536.50 303.45 L534.80 304.16 L533.14 304.87 L531.52 305.61 L529.94 306.36 L528.40 307.13 L526.90 307.91 L525.46 308.71 L524.05 309.53 L522.69 310.36 L521.38 311.20 L520.11 312.07 L518.91 312.98 L517.78 313.90 L516.71 314.83 L515.70 315.77 L514.73 316.72 L513.83 317.69 L512.97 318.67 L512.18 319.66 L511.44 320.67 L510.76 321.69 L510.14 322.72 L509.59 323.76 L509.09 324.82 L508.66 325.88 L508.30 326.96 L508.00 328.04 L507.77 329.13 L507.61 330.22 L507.52 331.32 L507.51 332.42 L507.56 333.52 L507.68 334.61 L507.87 335.70 L508.13 336.78 L508.46 337.85 L508.85 338.90 L509.31 339.95 L509.83 340.98 L510.42 342.00 L511.06 343.01 L511.77 343.99 L512.53 344.97 L513.35 345.92 L514.23 346.86 L515.17 347.78 L516.16 348.69 L517.20 349.58 L518.30 350.45 L519.45 351.30 L520.65 352.14 L521.90 352.96 L523.21 353.76 L524.56 354.54 L525.96 355.30 L527.41 356.05 L528.90 356.77 L530.44 357.48 L532.03 358.16 L533.65 358.83 L535.33 359.47 L537.04 360.10 L538.79 360.70 L540.58 361.28 L542.41 361.84 L544.28 362.38 L546.18 362.90 L548.12 363.39 L550.08 363.86 L552.09 364.31 L554.12 364.73 L556.18 365.13 L558.27 365.51 L560.39 365.87 L562.53 366.20 L564.69 366.50 L566.88 366.78 L569.09 367.04 L571.31 367.27 L573.56 367.48 L575.82 367.66 L578.10 367.82 L580.39 367.95 L582.69 368.06 L585.00 368.14 L587.32 368.19 L589.65 368.23 L591.99 368.23 L594.33 368.21 L596.67 368.17 L599.01 368.10 L601.35 368.01 L603.69 367.89 L606.03 367.75 L608.36 367.58 L610.68 367.39 L613.00 367.17 L615.31 366.94 L617.60 366.67 L619.89 366.39 L622.16 366.08 L624.41 365.75 L626.65 365.39 L628.87 365.01 L631.07 364.61 L633.24 364.19 L635.40 363.74 L637.53 363.27 L639.63 362.78 L641.71 362.27 L643.76 361.74 L645.78 361.18 L647.76 360.60 L649.72 360.01 L651.64 359.39 L653.53 358.75 L655.38 358.10 L657.20 357.42 L658.97 356.73 L660.71 356.01 L662.41 355.28 L664.06 354.53 L665.67 353.76 L667.24 352.98 L668.76 352.18 L670.24 351.36 L671.67 350.52 L673.05 349.67 L674.39 348.80 L675.68 347.92 L676.91 347.02 L678.10 346.10 L679.23 345.17 L680.31 344.23 L681.34 343.27 L682.31 342.29 L683.22 341.30 L684.08 340.30 L684.89 339.28 L685.63 338.25 L686.32 337.20 L686.94 336.15 L687.50 335.07 L688.00 333.99 L688.43 332.90 L688.80 331.79 L689.10 330.68 L689.33 329.56 L689.49 328.43 L689.58 327.30 L689.59 326.17 L689.54 325.04 L689.41 323.92 L689.21 322.80 L688.93 321.70 L688.59 320.60 L688.17 319.52 L687.69 318.46 L687.15 317.42 L686.54 316.39 L685.87 315.38 L685.13 314.39 L684.34 313.41 L683.49 312.46 L682.59 311.53 L681.63 310.62 L680.61 309.72 L679.55 308.85 L678.43 307.99 L677.25 307.15 L676.03 306.34 L674.76 305.54 L673.44 304.76 L672.08 303.99 L670.66 303.25 L669.20 302.53 L667.70 301.82 L666.15 301.14 L664.56 300.47 L662.92 299.82 L661.25 299.19 L659.53 298.58 L657.78 297.99 L655.99 297.42 L654.15 296.87 L652.29 296.34 L650.39 295.83 L648.45 295.34 L646.48 294.87 L644.49 294.42 L642.46 293.98 L640.40 293.57 L638.31 293.19 L636.20 292.84 L634.06 292.52 L631.89 292.23 L629.70 291.97 L627.49 291.73 L625.27 291.53 L623.02 291.35 L620.76 291.20 L618.48 291.08 L616.19 290.99 L613.89 290.92 L611.58 290.89 L609.27 290.88 L606.94 290.89 L604.61 290.94 L602.28 291.01 L599.95 291.11 L597.62 291.23 L595.30 291.37 L592.98 291.48 L590.66 291.57 L588.34 291.63 L586.01 291.67 L583.69 291.69 L581.37 291.68 L579.05 291.65 L576.73 291.60 L574.41 291.52 L572.09 291.43 L569.77 291.32 L567.46 291.19 L565.15 291.05 L562.85 290.90 L560.55 290.74 L558.25 290.57 L558.23 290.87 L560.52 291.05 L562.82 291.24 L565.12 291.43 L567.43 291.61 L569.74 291.79 L572.06 291.96 L574.37 292.12 L576.70 292.26 L579.02 292.40 L581.35 292.51 L583.67 292.61 L586.01 292.69 L588.34 292.75 L590.67 292.79 L593.00 292.81 L595.34 292.80 L597.67 292.77 L599.99 292.76 L602.31 292.77 L604.62 292.80 L606.92 292.87 L609.22 292.95 L611.52 293.06 L613.80 293.20 L616.06 293.36 L618.32 293.54 L620.56 293.74 L622.79 293.97 L624.99 294.22 L627.18 294.49 L629.35 294.78 L631.49 295.09 L633.62 295.42 L635.71 295.76 L637.79 296.13 L639.83 296.52 L641.85 296.92 L643.84 297.35 L645.79 297.80 L647.71 298.28 L649.59 298.79 L651.44 299.31 L653.25 299.87 L655.01 300.44 L656.74 301.03 L658.43 301.65 L660.07 302.29 L661.66 302.95 L663.21 303.62 L664.71 304.32 L666.16 305.03 L667.56 305.76 L668.92 306.50 L670.22 307.26 L671.46 308.03 L672.65 308.82 L673.79 309.62 L674.87 310.42 L675.90 311.24 L676.87 312.06 L677.78 312.89 L678.63 313.73 L679.43 314.57 L680.16 315.41 L680.84 316.26 L681.46 317.11 L682.03 317.95 L682.53 318.79 L682.98 319.63 L683.38 320.47 L683.72 321.31 L684.01 322.14 L684.24 322.96 L684.43 323.79 L684.57 324.61 L684.65 325.43 L684.69 326.26 L684.68 327.08 L684.62 327.91 L684.51 328.74 L684.35 329.58 L684.14 330.43 L683.87 331.28 L683.55 332.13 L683.18 333.00 L682.74 333.87 L682.26 334.74 L681.71 335.62 L681.11 336.50 L680.45 337.38 L679.73 338.27 L678.96 339.15 L678.12 340.04 L677.23 340.92 L676.29 341.80 L675.29 342.67 L674.23 343.54 L673.11 344.40 L671.95 345.25 L670.73 346.10 L669.45 346.93 L668.13 347.76 L666.75 348.57 L665.33 349.38 L663.85 350.17 L662.33 350.94 L660.77 351.70 L659.16 352.45 L657.50 353.18 L655.80 353.90 L654.06 354.59 L652.28 355.27 L650.46 355.93 L648.61 356.58 L646.71 357.20 L644.78 357.80 L642.82 358.38 L640.83 358.95 L638.81 359.49 L636.76 360.00 L634.68 360.50 L632.57 360.97 L630.44 361.42 L628.28 361.85 L626.11 362.25 L623.91 362.63 L621.70 362.98 L619.47 363.31 L617.22 363.61 L614.96 363.89 L612.69 364.14 L610.41 364.37 L608.12 364.57 L605.82 364.74 L603.52 364.89 L601.21 365.01 L598.90 365.10 L596.60 365.17 L594.29 365.21 L591.98 365.22 L589.68 365.21 L587.39 365.18 L585.10 365.11 L582.82 365.02 L580.55 364.91 L578.30 364.76 L576.06 364.60 L573.83 364.41 L571.63 364.19 L569.44 363.95 L567.27 363.68 L565.12 363.38 L563.00 363.07 L560.90 362.73 L558.83 362.36 L556.79 361.97 L554.77 361.56 L552.79 361.13 L550.84 360.67 L548.92 360.19 L547.04 359.69 L545.20 359.16 L543.39 358.62 L541.62 358.06 L539.89 357.47 L538.20 356.87 L536.56 356.24 L534.96 355.60 L533.40 354.94 L531.90 354.27 L530.44 353.57 L529.02 352.87 L527.66 352.14 L526.35 351.40 L525.09 350.65 L523.88 349.89 L522.72 349.11 L521.62 348.32 L520.58 347.52 L519.59 346.71 L518.65 345.89 L517.78 345.07 L516.95 344.24 L516.19 343.40 L515.49 342.56 L514.84 341.72 L514.25 340.87 L513.71 340.02 L513.24 339.17 L512.82 338.32 L512.45 337.46 L512.14 336.61 L511.89 335.76 L511.69 334.91 L511.54 334.06 L511.45 333.21 L511.41 332.35 L511.41 331.50 L511.47 330.64 L511.59 329.77 L511.75 328.90 L511.96 328.03 L512.23 327.15 L512.56 326.26 L512.94 325.37 L513.37 324.47 L513.87 323.57 L514.42 322.67 L515.03 321.76 L515.69 320.85 L516.42 319.94 L517.20 319.03 L518.05 318.13 L518.95 317.23 L519.90 316.33 L520.91 315.45 L521.98 314.59 L523.13 313.75 L524.35 312.91 L525.62 312.08 L526.94 311.27 L528.31 310.47 L529.74 309.69 L531.21 308.93 L532.73 308.18 L534.29 307.45 L535.90 306.74 L537.55 306.05 L539.25 305.38 L540.98 304.71 L542.74 304.05 L544.54 303.39 L546.36 302.73 L548.23 302.09 L550.12 301.45 L552.05 300.83 L554.00 300.23 L555.99 299.64 L558.01 299.07 L560.06 298.53 L562.13 298.01 L564.23 297.52 L566.36 297.06 L568.51 296.63 L570.68 296.24 L572.87 295.88 L575.08 295.57 L577.30 295.30Z" fill="#ee3e40"/></svg>
</body></html>
